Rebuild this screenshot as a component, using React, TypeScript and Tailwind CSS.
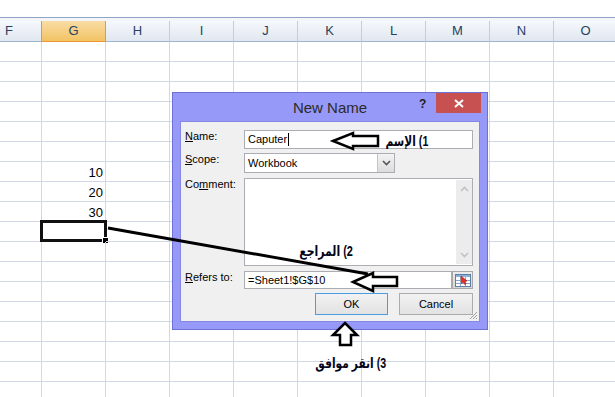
import React from "react";

const COLS = ["F", "G", "H", "I", "J", "K", "L", "M", "N", "O"];
const ROWS = Array.from({ length: 18 }, (_, i) => i);
const VALUES: Record<number, string> = { 6: "10", 7: "20", 8: "30" };

function HeaderRow() {
  return (
    <div className="flex h-[21px]">
      {COLS.map((c) =>
        c === "F" ? (
          <div
            key={c}
            className="h-full w-[41px] shrink-0 flex items-center justify-end pr-[28px] border-b border-[#9eb6ce] bg-linear-to-b from-[#f5f8fc] to-[#e1e7f0] text-[13px] text-[#27415f]"
          >
            {c}
          </div>
        ) : c === "G" ? (
          <div
            key={c}
            className="h-full w-[65px] shrink-0 flex items-center justify-center border-x border-b border-[#f29536] bg-linear-to-b from-[#f9dca4] to-[#f1c362] text-[13px] text-[#27415f]"
          >
            {c}
          </div>
        ) : (
          <div
            key={c}
            className="h-full w-[64px] shrink-0 flex items-center justify-center border-r border-b border-r-[#c3cfdd] border-b-[#9eb6ce] bg-linear-to-b from-[#f5f8fc] to-[#e1e7f0] text-[13px] text-[#27415f]"
          >
            {c}
          </div>
        )
      )}
    </div>
  );
}

function GridRow({ r }: { r: number }) {
  return (
    <div className="flex h-[20px]">
      {COLS.map((c) => (
        <div
          key={c}
          className={
            c === "F"
              ? "relative h-full w-[42px] shrink-0 border-r border-b border-[#d0d7e5]"
              : "relative h-full w-[64px] shrink-0 border-r border-b border-[#d0d7e5] flex items-center justify-end pr-[2px] pt-[2px] text-[13px] text-black"
          }
        >
          {c === "G" ? VALUES[r] : null}
          {c === "G" && r === 9 ? (
            <>
              <div className="absolute left-[-2px] top-[-2px] w-[67px] h-[22px] border-[3px] border-[#111]" />
              <div className="absolute left-[60px] top-[15px] w-[7px] h-[7px] bg-black border border-white" />
            </>
          ) : null}
        </div>
      ))}
    </div>
  );
}

function Chevron({ up, color }: { up?: boolean; color: string }) {
  return (
    <svg width="9" height="6" viewBox="0 0 9 6">
      <path
        d={up ? "M1 5 L4.5 1.5 L8 5" : "M1 1 L4.5 4.5 L8 1"}
        fill="none"
        stroke={color}
        strokeWidth="1.6"
      />
    </svg>
  );
}

function RefIcon() {
  return (
    <svg width="16" height="13" viewBox="0 0 16 13">
      <rect x="0.5" y="0.5" width="15" height="12" fill="#ffffff" stroke="#5c7fa8" />
      <rect x="1" y="1" width="14" height="2" fill="#8fb0d6" />
      <path d="M1 6.5 H15 M1 9.5 H15 M5.5 3 V12 M10.5 3 V12" stroke="#8fa6c4" strokeWidth="1" />
      <path d="M6 2 L12 7 L9.5 7.3 L11 10 L9.8 10.6 L8.3 8 L6.5 9.5 Z" fill="#e0302a" stroke="#a51a14" strokeWidth="0.6" />
    </svg>
  );
}

function Dialog() {
  return (
    <div className="absolute left-[172px] top-[92px] w-[316px] h-[238px] flex flex-col border border-[#6d71d4] bg-[#9699f7]">
      <div className="relative h-[28px] shrink-0 flex items-center justify-center">
        <span className="text-[15px] leading-[17px] text-[#2a2a2a]">New Name</span>
        <span className="absolute left-[246px] top-[4px] text-[12px] leading-[14px] font-bold text-[#1e1e1e]">?</span>
        <div className="absolute left-[263px] top-0 w-[45px] h-[20px] bg-[#c75050] flex items-center justify-center">
          <svg width="10" height="9" viewBox="0 0 10 9">
            <path d="M1 1 L9 8 M9 1 L1 8" stroke="#ffffff" strokeWidth="2" />
          </svg>
        </div>
      </div>

      <div className="relative flex-1 mx-[7px] mb-[7px] border border-[#8487e4] bg-[#f0f0f0] pl-[4px] pr-[6px] pt-[8px] flex flex-col text-[11px] text-black">
        <div className="flex h-[19px]">
          <span className="w-[59px] shrink-0 leading-[13px]">
            <span className="underline underline-offset-1">N</span>ame:
          </span>
          <div className="flex-1 flex items-center border border-[#abadb3] bg-white px-[3px]">
            <span>Caputer</span>
            <span className="ml-px w-px h-[13px] bg-black" />
          </div>
        </div>

        <div className="flex h-[20px] mt-[4px]">
          <span className="w-[59px] shrink-0 leading-[13px]">
            <span className="underline underline-offset-1">S</span>cope:
          </span>
          <div className="w-[151px] flex border border-[#abadb3] bg-white">
            <div className="flex-1 flex items-center px-[3px]">Workbook</div>
            <div className="w-[17px] flex items-center justify-center border-l border-[#c5c5c5] bg-linear-to-b from-[#f3f3f3] to-[#dcdcdc]">
              <Chevron color="#555555" />
            </div>
          </div>
        </div>

        <div className="flex h-[88px] mt-[5px]">
          <span className="w-[59px] shrink-0 leading-[13px]">
            Co<span className="underline underline-offset-1">m</span>ment:
          </span>
          <div className="flex-1 flex justify-end border border-[#abadb3] bg-white">
            <div className="w-[16px] my-[1px] flex flex-col items-center justify-between py-[6px] bg-[#ececec]">
              <Chevron up color="#c2c2c2" />
              <Chevron color="#c2c2c2" />
            </div>
          </div>
        </div>

        <div className="flex h-[18px] mt-[5px]">
          <span className="w-[59px] shrink-0 leading-[13px]">
            <span className="underline underline-offset-1">R</span>efers to:
          </span>
          <div className="flex-1 flex items-center border border-[#abadb3] bg-white px-[3px]">=Sheet1!$G$10</div>
          <div className="w-[21px] flex items-center justify-center border border-[#a8a8a8] bg-linear-to-b from-[#ececec] to-[#d6d6d6]">
            <RefIcon />
          </div>
        </div>

        <div className="flex h-[22px] mt-[4px] justify-end gap-[11px]">
          <div className="w-[73px] flex items-center justify-center border border-[#4a9de0] bg-linear-to-b from-[#f2f2f2] to-[#e2e2e2]">
            OK
          </div>
          <div className="w-[74px] flex items-center justify-center border border-[#acacac] bg-linear-to-b from-[#f2f2f2] to-[#e2e2e2]">
            Cancel
          </div>
        </div>

        <svg className="absolute right-px bottom-px" width="9" height="9" viewBox="0 0 9 9">
          <path d="M8 1 L1 8 M8 4 L4 8 M8 7 L7 8" stroke="#a0a0a0" strokeWidth="1" />
        </svg>
      </div>
    </div>
  );
}

function Annotations() {
  return (
    <>
      <svg className="absolute left-0 top-0 pointer-events-none" width="615" height="397" viewBox="0 0 615 397">
        <line x1="108" y1="228" x2="368" y2="274" stroke="#000" strokeWidth="3" />
        <polygon
          points="333,141 353,133 353,136 378,136 378,146 353,146 353,149"
          fill="#fff"
          stroke="#000"
          strokeWidth="2.5"
        />
        <polygon
          points="353,282 373,273 373,277 397,277 397,286 373,286 373,291"
          fill="#fff"
          stroke="#000"
          strokeWidth="2.5"
        />
        <polygon
          points="345,323 357,335 351,335 351,345 340,345 340,335 333,335"
          fill="#fff"
          stroke="#000"
          strokeWidth="2.5"
        />
      </svg>
      <span dir="rtl" className="absolute top-[131px] right-[187px] origin-right scale-x-[0.76] text-[14px] leading-[20px] font-bold text-[#05051a] whitespace-nowrap">
        1) الإسم
      </span>
      <span dir="rtl" className="absolute top-[241px] right-[262px] origin-right scale-x-[0.78] text-[14px] leading-[20px] font-bold text-[#05051a] whitespace-nowrap">
        2) المراجع
      </span>
      <span dir="rtl" className="absolute top-[353px] right-[229px] origin-right scale-x-[0.76] text-[14px] leading-[20px] font-bold text-[#05051a] whitespace-nowrap">
        3) انقر موافق
      </span>
    </>
  );
}

export default function App() {
  return (
    <div className="relative w-[615px] h-[397px] overflow-hidden bg-white font-['Liberation_Sans','DejaVu_Sans',Arial,sans-serif]">
      <div className="h-[17px] bg-white" />
      <div className="h-px bg-[#8fa5c2]" />
      <div className="h-[3px] bg-[#f3f5f9]" />
      <HeaderRow />
      {ROWS.map((r) => (
        <GridRow key={r} r={r} />
      ))}
      <Dialog />
      <Annotations />
    </div>
  );
}
